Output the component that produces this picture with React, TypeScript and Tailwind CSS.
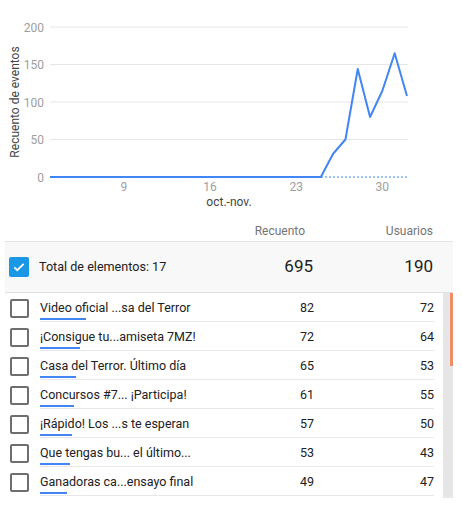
import React from 'react';

const values = [
    0, 0, 0, 0, 0, 0, 0, 0, 0, 0, 0, 0, 0, 0, 0, 0, 0, 0, 0, 0, 0, 0, 0, 31, 50, 144, 80, 115, 165, 108,
];

const rows = [
    { name: 'Video oficial ...sa del Terror', count: 82, users: 72 },
    { name: '¡Consigue tu...amiseta 7MZ!', count: 72, users: 64 },
    { name: 'Casa del Terror. Último día', count: 65, users: 53 },
    { name: 'Concursos #7... ¡Participa!', count: 61, users: 55 },
    { name: '¡Rápido! Los ...s te esperan', count: 57, users: 50 },
    { name: 'Que tengas bu... el último...', count: 53, users: 43 },
    { name: 'Ganadoras ca...ensayo final', count: 49, users: 47 },
];

const X0 = 50;
const STEP = 12.31;
const yOf = (v: number) => 177 - v * 0.75;

const Chart = () => {
    const pts = values.map((v, i) => `${X0 + i * STEP},${yOf(v)}`).join(' ');
    const grid = [200, 150, 100, 50];
    const xTicks = [
        { i: 6, label: '9' },
        { i: 13, label: '16' },
        { i: 20, label: '23' },
        { i: 27, label: '30' },
    ];

    return (
        <svg width={462} height={218} className="block" style={{ fontFamily: 'Roboto, sans-serif' }}>
            {grid.map((g) => (
                <g key={g}>
                    <line x1={X0} x2={408} y1={yOf(g)} y2={yOf(g)} stroke="#e6e6e6" strokeWidth={1} />
                    <text x={44} y={yOf(g) + 4.5} textAnchor="end" fontSize={12} fill="#9e9e9e">
                        {g}
                    </text>
                </g>
            ))}
            <text x={44} y={181.5} textAnchor="end" fontSize={12} fill="#9e9e9e">
                0
            </text>
            <text
                x={0}
                y={0}
                transform="translate(19 102) rotate(-90)"
                textAnchor="middle"
                fontSize={12}
                fill="#444"
            >
                Recuento de eventos
            </text>

            {/* comparison line */}
            <line x1={321} x2={408} y1={177} y2={177} stroke="#7fb0f2" strokeWidth={1.5} strokeDasharray="2 2" />
            <polyline points={pts} fill="none" stroke="#4285f4" strokeWidth={2} strokeLinejoin="round" />

            {xTicks.map((t) => (
                <text key={t.label} x={X0 + t.i * STEP} y={191} textAnchor="middle" fontSize={12} fill="#9e9e9e">
                    {t.label}
                </text>
            ))}
            <text x={229} y={206} textAnchor="middle" fontSize={12} fill="#444">
                oct.-nov.
            </text>
        </svg>
    );
};

const Check = ({ checked }: { checked?: boolean }) =>
    checked ? (
        <div className="w-5 h-5 rounded-[2px] bg-[#1a98e6] flex items-center justify-center">
            <svg width={14} height={14} viewBox="0 0 24 24">
                <path d="M4 12.5l5 5L20 6.5" fill="none" stroke="#fff" strokeWidth={3} />
            </svg>
        </div>
    ) : (
        <div className="w-[19px] h-[19px] rounded-[2px] border-2 border-[#6e6e6e]" />
    );

export default function App() {
    return (
        <div className="w-[462px] h-[511px] bg-white text-[#212121] overflow-hidden" style={{ fontFamily: 'Roboto, sans-serif' }}>
            <Chart />

            <div className="ml-[5px] w-[448px]">
                {/* header */}
                <div className="h-[24px] pt-[5px] flex items-start border-b border-[#e4e4e4] text-[12px] leading-[16px] text-[#757575]">
                    <div className="w-[300px] text-right">Recuento</div>
                    <div className="w-[128px] text-right">Usuarios</div>
                </div>

                {/* total */}
                <div className="h-[51px] flex items-center bg-[#f8f8f8] border-b border-[#e0e0e0]">
                    <div className="w-[34px] pl-[4px] flex items-center">
                        <Check checked />
                    </div>
                    <div className="w-[228px] text-[12.6px]">Total de elementos: 17</div>
                    <div className="w-[46px] text-right text-[17px]">695</div>
                    <div className="w-[120px] text-right text-[17px]">190</div>
                </div>

                {/* list */}
                <div className="flex">
                    <div className="w-[438px]">
                        {rows.map((r) => (
                            <div key={r.name} className="flex h-[29px]">
                                <div className="w-[35px] pl-[5px] pt-[6px]">
                                    <Check />
                                </div>
                                <div className="w-[394px] relative flex items-center pt-[2px] border-b border-[#e8e8e8] text-[12.5px]">
                                    <div className="w-[228px] truncate">{r.name}</div>
                                    <div className="w-[46px] text-right">{r.count}</div>
                                    <div className="w-[120px] text-right">{r.users}</div>
                                    <div
                                        className="absolute left-0 bottom-[1px] h-[2px] bg-[#4285f4]"
                                        style={{ width: `${Math.round(r.count * 0.56)}px` }}
                                    />
                                </div>
                            </div>
                        ))}
                    </div>
                    <div className="w-[10px] h-[205px] bg-[#e6e6e6] flex justify-end">
                        <div className="w-[3px] h-[73px] bg-[#f08c66]" />
                    </div>
                </div>
            </div>
        </div>
    );
}
